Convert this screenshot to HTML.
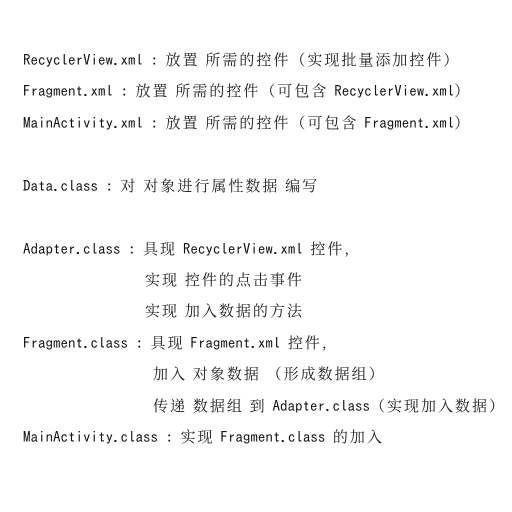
<!DOCTYPE html>
<html><head><meta charset="utf-8"><style>
html,body{margin:0;padding:0;background:#fff;width:512px;height:512px;overflow:hidden}
div.l{position:absolute;left:23px;font-family:"IPAGothic","Noto Sans CJK SC",sans-serif;font-size:15px;color:#111;white-space:pre;line-height:18px}
.c{font-family:"Noto Serif CJK SC","Noto Sans CJK SC",serif;font-size:15px;color:#222;letter-spacing:2px}
</style></head><body>
<div class="l" style="top:51px">RecyclerView.xml : <span class="c">放置 所需的控件（实现批量添加控件）</span></div>
<div class="l" style="top:82px">Fragment.xml : <span class="c">放置 所需的控件（可包含 </span>RecyclerView.xml<span class="c">）</span></div>
<div class="l" style="top:114px">MainActivity.xml : <span class="c">放置 所需的控件（可包含 </span>Fragment.xml<span class="c">）</span></div>
<div class="l" style="top:177px">Data.class : <span class="c">对 对象进行属性数据 编写</span></div>
<div class="l" style="top:240px">Adapter.class : <span class="c">具现 </span>RecyclerView.xml <span class="c">控件,</span></div>
<div class="l" style="top:271px;left:145px"><span class="c">实现 控件的点击事件</span></div>
<div class="l" style="top:302px;left:145px"><span class="c">实现 加入数据的方法</span></div>
<div class="l" style="top:334px">Fragment.class : <span class="c">具现 </span>Fragment.xml <span class="c">控件,</span></div>
<div class="l" style="top:365px;left:153px"><span class="c">加入 对象数据 （形成数据组）</span></div>
<div class="l" style="top:397px;left:153px"><span class="c">传递 数据组 到 </span>Adapter.class<span class="c">（实现加入数据）</span></div>
<div class="l" style="top:428px">MainActivity.class : <span class="c">实现 </span>Fragment.class <span class="c">的加入</span></div>
</body></html>
